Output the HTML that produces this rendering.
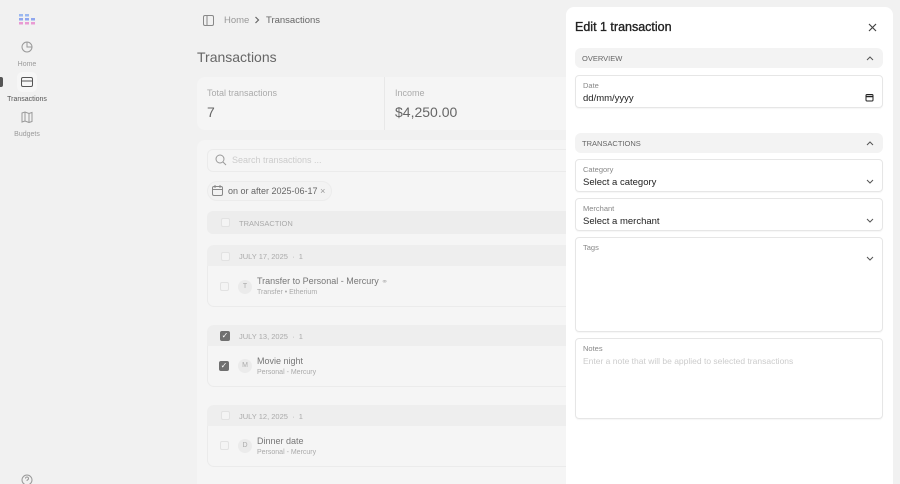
<!DOCTYPE html>
<html><head><meta charset="utf-8"><style>
*{box-sizing:border-box;margin:0;padding:0}
html,body{width:900px;height:484px;overflow:hidden}
body{background:#f1f1f1;font-family:"Liberation Sans",sans-serif;position:relative;color:#777}
.a{position:absolute}
.lbl{font-size:7px;color:#9a9a9a;text-align:center;width:54px;left:0}
.card{background:#f5f5f5;border-radius:8px}
.cb{width:9px;height:9px;border:1px solid #e2e2e2;border-radius:2px;background:#f4f4f4}
.cbc{width:10px;height:10px;border-radius:2px;background:#707070;color:#fff;font-size:8px;line-height:10px;text-align:center}
.gh{background:#eeeeee;border-radius:7px 7px 0 0;height:22px}
.row{background:#f5f5f5;border:1px solid #ebebeb;border-top:none;border-radius:0 0 7px 7px}
.av{width:14px;height:14px;border-radius:50%;background:#ebebeb;font-size:7px;color:#aaa;text-align:center;line-height:14px}
.panel{background:#fff;border-radius:8px;left:566px;top:7px;width:327px;height:500px}
.sec{left:9px;width:308px;height:20px;background:#f3f3f3;border-radius:6px;font-size:7.5px;color:#666;padding:6px 7px}
.fld{left:9px;width:308px;border:1px solid #e6e6e6;border-radius:4px;box-shadow:0 1px 1px rgba(0,0,0,.04)}
.fl{font-size:7.5px;color:#888;position:absolute;left:7px;top:5px}
.fv{font-size:9.5px;color:#222;position:absolute;left:7px;top:17px}
.chev{position:absolute;right:8px}
</style></head><body>
<svg class="a" style="left:18px;top:13px" width="19" height="13"><g fill="#9bb8f0"><rect x="1" y="1" width="4" height="2.5"/><rect x="7" y="1" width="4" height="2.5"/></g><g fill="#8fa6ee"><rect x="1" y="5" width="4" height="2.5"/><rect x="7" y="5" width="4" height="2.5"/><rect x="13" y="5" width="4" height="2.5"/></g><g fill="#e99ad3"><rect x="1" y="9" width="4" height="2.5"/><rect x="7" y="9" width="4" height="2.5"/><rect x="13" y="9" width="4" height="2.5"/></g></svg>
<svg class="a" style="left:21px;top:41px" width="12" height="12" fill="none" stroke="#999" stroke-width="1"><circle cx="6" cy="6" r="5"/><path d="M6 1v5h5"/></svg>
<div class="a lbl" style="top:61px">Home</div>
<div class="a" style="left:0;top:77px;width:3px;height:10px;background:#555;border-radius:0 2px 2px 0"></div>
<div class="a" style="left:17px;top:72px;width:20px;height:20px;background:#f6f6f6;border-radius:5px"></div>
<svg class="a" style="left:21px;top:77px" width="12" height="10" fill="none" stroke="#555" stroke-width="1"><rect x="0.5" y="0.5" width="11" height="9" rx="1.5"/><path d="M0.5 4h11"/></svg>
<div class="a lbl" style="top:96px;color:#555">Transactions</div>
<svg class="a" style="left:21px;top:111px" width="12" height="12" fill="none" stroke="#999" stroke-width="1"><path d="M1 2l3-1 4 1.5 3-1v9l-3 1-4-1.5-3 1z M4 1v9 M8 2.5v9"/></svg>
<div class="a lbl" style="top:131px">Budgets</div>
<svg class="a" style="left:21px;top:474px" width="12" height="12" fill="none" stroke="#999" stroke-width="1"><circle cx="6" cy="6" r="5"/><path d="M4.5 4.5a1.5 1.5 0 1 1 2 1.4c-.5.2-.5.6-.5 1.1"/></svg>
<svg class="a" style="left:203px;top:15px" width="11" height="11" fill="none" stroke="#888" stroke-width="1"><rect x="0.5" y="0.5" width="10" height="10" rx="1.5"/><path d="M4 .5v10"/></svg>
<div class="a" style="left:224px;top:15px;font-size:9.5px;color:#999">Home</div>
<svg class="a" style="left:254px;top:16px" width="6" height="8" fill="none" stroke="#666" stroke-width="1.2"><path d="M1.5 1l3 3-3 3"/></svg>
<div class="a" style="left:266px;top:15px;font-size:9.5px;color:#666">Transactions</div>
<div class="a" style="left:197px;top:49px;font-size:14px;color:#666">Transactions</div>
<div class="a card" style="left:197px;top:77px;width:400px;height:53px"></div>
<div class="a" style="left:384px;top:77px;width:1px;height:53px;background:#e8e8e8"></div>
<div class="a" style="left:207px;top:88px;font-size:9px;color:#aaa">Total transactions</div>
<div class="a" style="left:207px;top:104px;font-size:14px;color:#666">7</div>
<div class="a" style="left:395px;top:88px;font-size:9px;color:#aaa">Income</div>
<div class="a" style="left:395px;top:104px;font-size:14px;color:#666">$4,250.00</div>
<div class="a card" style="left:197px;top:140px;width:400px;height:360px"></div>
<div class="a" style="left:207px;top:149px;width:380px;height:23px;border:1px solid #ebebeb;border-radius:6px;background:#f5f5f5"></div>
<svg class="a" style="left:215px;top:154px" width="12" height="12" fill="none" stroke="#999" stroke-width="1"><circle cx="5" cy="5" r="4"/><path d="M8 8l3 3"/></svg>
<div class="a" style="left:232px;top:155px;font-size:9px;color:#ccc">Search transactions ...</div>
<div class="a" style="left:207px;top:181px;width:125px;height:20px;border-radius:10px;background:#f3f3f3;border:1px solid #ececec"></div>
<svg class="a" style="left:212px;top:185px" width="11" height="11" fill="none" stroke="#888" stroke-width="1"><rect x="0.5" y="1.5" width="10" height="9" rx="1.5"/><path d="M.5 4.5h10M3 0v3M8 0v3"/></svg>
<div class="a" style="left:228px;top:186px;font-size:9px;color:#666">on or after 2025-06-17 <span style="color:#999">×</span></div>
<div class="a" style="left:207px;top:211px;width:380px;height:23px;background:#ededed;border-radius:6px"></div>
<div class="a cb" style="left:221px;top:218px"></div>
<div class="a" style="left:239px;top:219px;font-size:7.5px;color:#aaa">TRANSACTION</div>

<div class="a gh" style="left:207px;top:245px;width:380px"></div>
<div class="a row" style="left:207px;top:266px;width:380px;height:41px"></div>
<div class="a cb" style="left:221px;top:252px"></div>
<div class="a" style="left:239px;top:252px;font-size:7.5px;color:#aaa">JULY 17, 2025 &nbsp;·&nbsp; 1</div>
<div class="a cb" style="left:220px;top:282px"></div>
<div class="a av" style="left:238px;top:280px">T</div>
<div class="a" style="left:257px;top:276px;font-size:9px;color:#777">Transfer to Personal - Mercury <span style="color:#bbb;font-size:8px">⚭</span></div>
<div class="a" style="left:257px;top:289px;font-size:7px;color:#aaa">Transfer • Etherium</div>

<div class="a gh" style="left:207px;top:325px;width:380px"></div>
<div class="a row" style="left:207px;top:346px;width:380px;height:41px"></div>
<div class="a cbc" style="left:220px;top:331px">✓</div>
<div class="a" style="left:239px;top:332px;font-size:7.5px;color:#aaa">JULY 13, 2025 &nbsp;·&nbsp; 1</div>
<div class="a cbc" style="left:219px;top:361px">✓</div>
<div class="a av" style="left:238px;top:359px">M</div>
<div class="a" style="left:257px;top:356px;font-size:9px;color:#777">Movie night</div>
<div class="a" style="left:257px;top:369px;font-size:7px;color:#aaa">Personal - Mercury</div>

<div class="a gh" style="left:207px;top:405px;width:380px"></div>
<div class="a row" style="left:207px;top:426px;width:380px;height:41px"></div>
<div class="a cb" style="left:221px;top:411px"></div>
<div class="a" style="left:239px;top:412px;font-size:7.5px;color:#aaa">JULY 12, 2025 &nbsp;·&nbsp; 1</div>
<div class="a cb" style="left:220px;top:441px"></div>
<div class="a av" style="left:238px;top:439px">D</div>
<div class="a" style="left:257px;top:436px;font-size:9px;color:#777">Dinner date</div>
<div class="a" style="left:257px;top:449px;font-size:7px;color:#aaa">Personal - Mercury</div>

<div class="a panel">
<div class="a" style="left:9px;top:13px;font-size:12.5px;color:#222;-webkit-text-stroke:0.35px #222">Edit 1 transaction</div>
<svg class="a" style="left:302px;top:16px" width="9" height="9" stroke="#444" stroke-width="1.2"><path d="M1 1l7 7M8 1l-7 7"/></svg>
<div class="a sec" style="top:41px">OVERVIEW</div>
<svg class="a" style="left:300px;top:48px" width="8" height="6" fill="none" stroke="#555"><path d="M1 5l3-3 3 3"/></svg>
<div class="a fld" style="top:68px;height:33px"><div class="fl">Date</div><div class="fv">dd/mm/yyyy</div>
<svg class="chev" style="top:17px" width="9" height="9" fill="none" stroke="#222"><rect x="1" y="1.5" width="7" height="6.5" rx="1"/><path d="M1 3.5h7" stroke-width="1.5"/></svg></div>
<div class="a sec" style="top:126px">TRANSACTIONS</div>
<svg class="a" style="left:300px;top:133px" width="8" height="6" fill="none" stroke="#555"><path d="M1 5l3-3 3 3"/></svg>
<div class="a fld" style="top:152px;height:33px"><div class="fl">Category</div><div class="fv">Select a category</div>
<svg class="chev" style="top:19px" width="8" height="6" fill="none" stroke="#555"><path d="M1 1l3 3 3-3"/></svg></div>
<div class="a fld" style="top:191px;height:33px"><div class="fl">Merchant</div><div class="fv">Select a merchant</div>
<svg class="chev" style="top:19px" width="8" height="6" fill="none" stroke="#555"><path d="M1 1l3 3 3-3"/></svg></div>
<div class="a fld" style="top:230px;height:95px"><div class="fl">Tags</div>
<svg class="chev" style="top:18px" width="8" height="6" fill="none" stroke="#555"><path d="M1 1l3 3 3-3"/></svg></div>
<div class="a fld" style="top:331px;height:81px"><div class="fl">Notes</div><div class="fv" style="top:17px;font-size:8.5px;color:#ccc">Enter a note that will be applied to selected transactions</div></div>
</div>
</body></html>
